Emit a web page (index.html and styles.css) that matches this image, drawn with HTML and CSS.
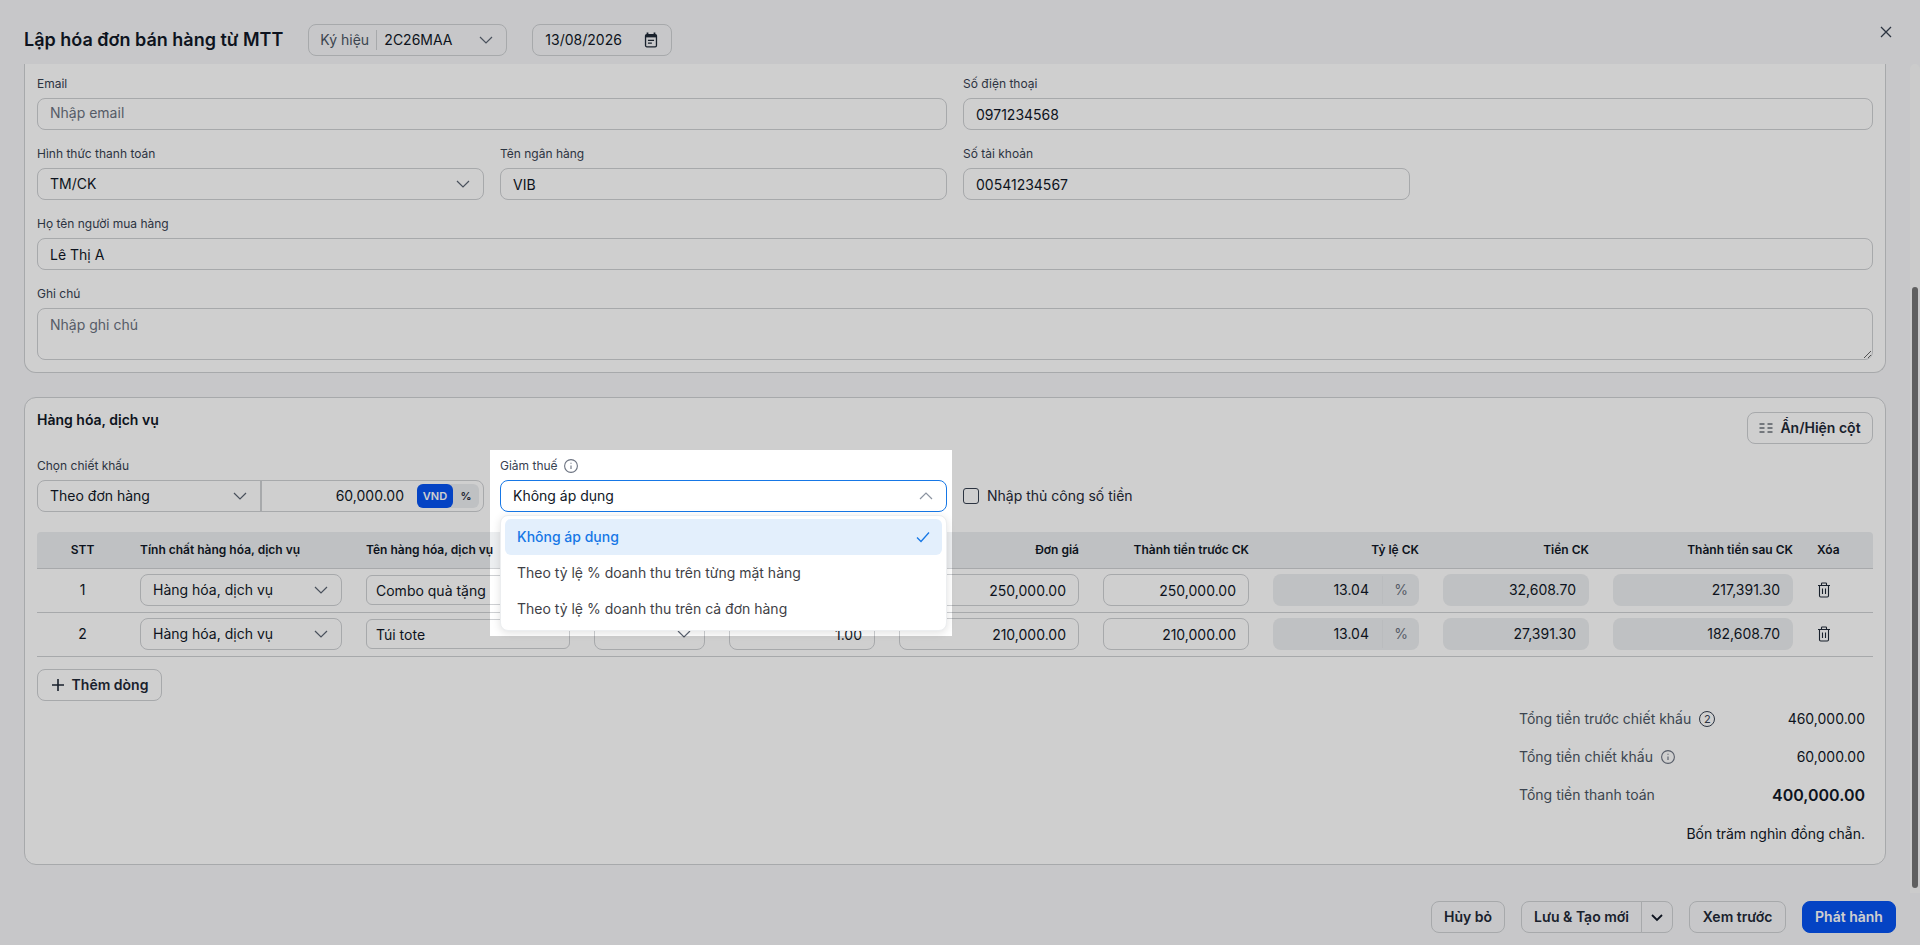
FILE: index.html
```html
<!DOCTYPE html>
<html lang="vi">

<head>
    <meta charset="UTF-8">
    <meta name="viewport" content="width=device-width, initial-scale=1.0">
    <title>Lập hóa đơn bán hàng từ MTT</title>
    <link rel="stylesheet" href="styles.css">
</head>

<body>
    <div class="modal">
        <header class="modal-header">
            <h1 class="modal-title">Lập hóa đơn bán hàng từ MTT</h1>
            <div class="symbol-picker">
                <span class="symbol-label">Ký hiệu</span>
                <span class="symbol-value">2C26MAA</span>
                <svg class="chevron" viewBox="0 0 16 16"><path d="M2 5l6 6 6-6"/></svg>
            </div>
            <div class="date-picker">
                <span>13/08/2026</span>
                <svg class="calendar-icon" viewBox="0 0 16 18">
                    <path d="M4 0.5v2.5M12 0.5v2.5" stroke-width="2"/>
                    <rect x="1.75" y="2.75" width="12.5" height="14" rx="1.5" stroke-width="1.5"/>
                    <path d="M2 4.5h12" stroke-width="3"/>
                    <path d="M4.5 9.5h7M4.5 12.5h4.5" stroke-width="1.5"/>
                </svg>
            </div>
            <button class="close-btn" aria-label="Đóng">
                <svg viewBox="0 0 12 12"><path d="M1 1l10 10M11 1L1 11"/></svg>
            </button>
        </header>

        <div class="modal-main">
            <div class="modal-content">
                <section class="card card-buyer">
                    <div class="form-grid">
                        <div class="field span-2">
                            <label class="field-label">Email</label>
                            <input class="text-input empty-input" type="text" placeholder="Nhập email">
                        </div>
                        <div class="field span-2">
                            <label class="field-label">Số điện thoại</label>
                            <input class="text-input" type="text" value="0971234568">
                        </div>
                        <div class="field">
                            <label class="field-label">Hình thức thanh toán</label>
                            <div class="select-box">
                                <span>TM/CK</span>
                                <svg class="chevron" viewBox="0 0 16 16"><path d="M2 5l6 6 6-6"/></svg>
                            </div>
                        </div>
                        <div class="field">
                            <label class="field-label">Tên ngân hàng</label>
                            <input class="text-input" type="text" value="VIB">
                        </div>
                        <div class="field">
                            <label class="field-label">Số tài khoản</label>
                            <input class="text-input" type="text" value="00541234567">
                        </div>
                        <div class="field span-4">
                            <label class="field-label">Họ tên người mua hàng</label>
                            <input class="text-input" type="text" value="Lê Thị A">
                        </div>
                        <div class="field span-4">
                            <label class="field-label">Ghi chú</label>
                            <textarea class="text-area" placeholder="Nhập ghi chú"></textarea>
                        </div>
                    </div>
                </section>

                <section class="card card-items">
                    <div class="items-top">
                        <h2 class="items-title">Hàng hóa, dịch vụ</h2>
                        <button class="btn btn-columns">
                            <svg class="columns-icon" viewBox="0 0 14 10">
                                <path d="M0.5 1h5M0.5 5h5M0.5 9h5M8.5 1h5M8.5 5h5M8.5 9h5"/>
                            </svg>
                            Ẩn/Hiện cột
                        </button>
                    </div>

                    <div class="form-grid discount-row">
                        <div class="field">
                            <label class="field-label">Chọn chiết khấu</label>
                            <div class="discount-group">
                                <div class="discount-select">
                                    <span>Theo đơn hàng</span>
                                    <svg class="chevron" viewBox="0 0 16 16"><path d="M2 5l6 6 6-6"/></svg>
                                </div>
                                <div class="discount-amount">
                                    <span class="discount-value">60,000.00</span>
                                    <div class="unit-toggle">
                                        <span class="unit unit-active">VND</span>
                                        <span class="unit">%</span>
                                    </div>
                                </div>
                            </div>
                        </div>
                        <div class="field tax-field">
                            <label class="field-label">
                                Giảm thuế
                                <svg class="info-icon" viewBox="0 0 14 14">
                                    <circle cx="7" cy="7" r="6.4"/>
                                    <path d="M7 6.5v3.5M7 3.8v1"/>
                                </svg>
                            </label>
                            <div class="select-box select-open">
                                <span>Không áp dụng</span>
                                <svg class="chevron" viewBox="0 0 16 16"><path d="M2 11l6-6 6 6"/></svg>
                            </div>
                            <ul class="dropdown">
                                <li class="dropdown-item dropdown-item-active">
                                    Không áp dụng
                                    <svg class="check-icon" viewBox="0 0 14 14"><path d="M1 7.5l4 4 8-9"/></svg>
                                </li>
                                <li class="dropdown-item">Theo tỷ lệ % doanh thu trên từng mặt hàng</li>
                                <li class="dropdown-item">Theo tỷ lệ % doanh thu trên cả đơn hàng</li>
                            </ul>
                        </div>
                        <label class="manual-check">
                            <span class="checkbox"></span>
                            Nhập thủ công số tiền
                        </label>
                    </div>

                    <div class="items-table">
                        <div class="tbl-row tbl-head">
                            <div class="cell center">STT</div>
                            <div class="cell">Tính chất hàng hóa, dịch vụ</div>
                            <div class="cell">Tên hàng hóa, dịch vụ</div>
                            <div class="cell"></div>
                            <div class="cell"></div>
                            <div class="cell right">Đơn giá</div>
                            <div class="cell right">Thành tiền trước CK</div>
                            <div class="cell right">Tỷ lệ CK</div>
                            <div class="cell right">Tiền CK</div>
                            <div class="cell right">Thành tiền sau CK</div>
                            <div class="cell">Xóa</div>
                        </div>

                        <div class="tbl-row">
                            <div class="cell center">1</div>
                            <div class="cell">
                                <div class="select-box"><span>Hàng hóa, dịch vụ</span><svg class="chevron" viewBox="0 0 16 16"><path d="M2 5l6 6 6-6"/></svg></div>
                            </div>
                            <div class="cell"><input class="text-input name-input" type="text" value="Combo quà tặng"></div>
                            <div class="cell">
                                <div class="select-box"><span></span><svg class="chevron" viewBox="0 0 16 16"><path d="M2 5l6 6 6-6"/></svg></div>
                            </div>
                            <div class="cell"><input class="text-input num-input" type="text"></div>
                            <div class="cell"><input class="text-input num-input" type="text" value="250,000.00"></div>
                            <div class="cell"><input class="text-input num-input" type="text" value="250,000.00"></div>
                            <div class="cell">
                                <div class="readonly-box"><span class="percent-value">13.04</span><span class="percent-unit">%</span></div>
                            </div>
                            <div class="cell"><div class="readonly-box">32,608.70</div></div>
                            <div class="cell"><div class="readonly-box">217,391.30</div></div>
                            <div class="cell">
                                <svg class="trash-icon" viewBox="0 0 14 16">
                                    <path d="M1 3.5h12M4.5 3.5V1.7q0-.7.7-.7h3.6q.7 0 .7.7v1.8M2.5 3.5v10.3q0 1.2 1.2 1.2h6.6q1.2 0 1.2-1.2V3.5M5.5 6.5v5.5M8.5 6.5v5.5"/>
                                </svg>
                            </div>
                        </div>

                        <div class="tbl-row">
                            <div class="cell center">2</div>
                            <div class="cell">
                                <div class="select-box"><span>Hàng hóa, dịch vụ</span><svg class="chevron" viewBox="0 0 16 16"><path d="M2 5l6 6 6-6"/></svg></div>
                            </div>
                            <div class="cell"><input class="text-input name-input" type="text" value="Túi tote"></div>
                            <div class="cell">
                                <div class="select-box"><span></span><svg class="chevron" viewBox="0 0 16 16"><path d="M2 5l6 6 6-6"/></svg></div>
                            </div>
                            <div class="cell"><input class="text-input num-input" type="text" value="1.00"></div>
                            <div class="cell"><input class="text-input num-input" type="text" value="210,000.00"></div>
                            <div class="cell"><input class="text-input num-input" type="text" value="210,000.00"></div>
                            <div class="cell">
                                <div class="readonly-box"><span class="percent-value">13.04</span><span class="percent-unit">%</span></div>
                            </div>
                            <div class="cell"><div class="readonly-box">27,391.30</div></div>
                            <div class="cell"><div class="readonly-box">182,608.70</div></div>
                            <div class="cell">
                                <svg class="trash-icon" viewBox="0 0 14 16">
                                    <path d="M1 3.5h12M4.5 3.5V1.7q0-.7.7-.7h3.6q.7 0 .7.7v1.8M2.5 3.5v10.3q0 1.2 1.2 1.2h6.6q1.2 0 1.2-1.2V3.5M5.5 6.5v5.5M8.5 6.5v5.5"/>
                                </svg>
                            </div>
                        </div>
                    </div>

                    <button class="btn btn-add">
                        <svg class="plus-icon" viewBox="0 0 14 14"><path d="M7 1v12M1 7h12"/></svg>
                        Thêm dòng
                    </button>

                    <div class="summary">
                        <div class="summary-row">
                            <span class="summary-label">
                                Tổng tiền trước chiết khấu
                                <span class="count-badge">2</span>
                            </span>
                            <span>460,000.00</span>
                        </div>
                        <div class="summary-row">
                            <span class="summary-label">
                                Tổng tiền chiết khấu
                                <svg class="info-icon" viewBox="0 0 14 14">
                                    <circle cx="7" cy="7" r="6.4"/>
                                    <path d="M7 6.5v3.5M7 3.8v1"/>
                                </svg>
                            </span>
                            <span>60,000.00</span>
                        </div>
                        <div class="summary-row">
                            <span class="summary-label">Tổng tiền thanh toán</span>
                            <span class="summary-total">400,000.00</span>
                        </div>
                        <div class="summary-words">Bốn trăm nghìn đồng chẵn.</div>
                    </div>
                </section>
            </div>

            <div class="scroll-track">
                <div class="scroll-thumb"></div>
            </div>
        </div>

        <footer class="modal-footer">
            <button class="btn btn-cancel">Hủy bỏ</button>
            <div class="btn-split">
                <button class="btn btn-split-main">Lưu &amp; Tạo mới</button>
                <button class="btn btn-split-caret" aria-label="Thêm">
                    <svg class="chevron chevron-bold" viewBox="0 0 16 16"><path d="M3 6l5 5 5-5"/></svg>
                </button>
            </div>
            <button class="btn btn-preview">Xem trước</button>
            <button class="btn btn-primary">Phát hành</button>
        </footer>
    </div>

    <!-- lop phu huong dan, chua lo quanh o Giam thue -->
    <div class="spotlight"></div>
</body>

</html>
```

FILE: styles.css
```css
* {
    box-sizing: border-box;
}

body {
    margin: 0;
    height: 100vh;
    overflow: hidden;
    position: relative;
    background: #f5f6f8;
    color: #111827;
    font-family: Inter, "Noto Sans", sans-serif;
    font-size: 14px;
    line-height: 20px;
}

button,
input,
textarea {
    font: inherit;
    color: inherit;
}

.modal {
    display: flex;
    flex-direction: column;
    height: 100%;
}

/* Header */
.modal-header {
    display: flex;
    align-items: center;
    height: 64px;
    flex-shrink: 0;
    padding: 16px 24px 0;
}

.modal-title {
    margin: 0 25px 0 0;
    font-size: 18px;
    line-height: 28px;
    font-weight: 600;
}

.symbol-picker,
.date-picker {
    display: flex;
    align-items: center;
    height: 32px;
    border: 1px solid #ced0d3;
    border-radius: 8px;
}

.symbol-picker {
    width: 199px;
    padding: 0 12px 0 11px;
}

.symbol-label {
    color: #4b5563;
    padding-right: 8px;
    border-right: 1px solid #ced0d3;
    width: 57px;
    white-space: nowrap;
}

.symbol-value {
    margin-left: 7px;
    flex: 1;
}

.date-picker {
    width: 140px;
    margin-left: 25px;
    padding: 0 13px 0 12px;
    justify-content: space-between;
}

.calendar-icon {
    width: 14px;
    height: 16px;
    fill: none;
    stroke: #1f2937;
}

.close-btn {
    margin-left: auto;
    margin-right: 4px;
    margin-top: -16px;
    padding: 0;
    border: none;
    background: none;
    width: 12px;
    height: 12px;
    display: flex;
}

.close-btn svg {
    fill: none;
    stroke: #374151;
    stroke-width: 1.3;
}

/* Body */
.modal-main {
    flex: 1;
    min-height: 0;
    display: flex;
}

.modal-content {
    flex: 1;
    min-width: 0;
    padding-left: 24px;
    margin-right: 24px;
}

.scroll-track {
    width: 10px;
    border-radius: 5px 5px 0 0;
    background: #fafafa;
    padding: 223px 2px 0;
}

.scroll-thumb {
    width: 6px;
    height: 601px;
    border-radius: 3px;
    background: #777;
}

.card {
    background: #fff;
    border: 1px solid #ced0d3;
    border-radius: 12px;
    padding: 12px;
}

.card-buyer {
    border-top: none;
    border-radius: 0 0 12px 12px;
    margin-bottom: 24px;
}

.card-items {
    padding-bottom: 20px;
}

.form-grid {
    display: grid;
    grid-template-columns: repeat(4, 1fr);
    gap: 16px;
}

.field {
    display: flex;
    flex-direction: column;
    gap: 6px;
    min-width: 0;
}

.span-2 {
    grid-column: span 2;
}

.span-4 {
    grid-column: span 4;
}

.field-label {
    display: flex;
    align-items: center;
    gap: 6px;
    font-size: 12px;
    line-height: 16px;
    color: #374151;
}

.text-input,
.select-box,
.text-area {
    width: 100%;
    height: 32px;
    padding: 0 12px;
    background: transparent;
    border: 1px solid #ced0d3;
    border-radius: 8px;
    outline: none;
}

.text-input::placeholder,
.text-area::placeholder {
    color: #6b7280;
    opacity: 1;
}

.empty-input {
    padding-bottom: 4px;
}

.text-area {
    display: block;
    height: 52px;
    padding-top: 6px;
    resize: vertical;
}

.select-box {
    display: flex;
    align-items: center;
    justify-content: space-between;
}

.select-open {
    border-color: #1677e6;
}

.select-open .chevron {
    stroke: #8b93a0;
}

.chevron {
    width: 16px;
    height: 16px;
    flex-shrink: 0;
    fill: none;
    stroke: #5b6472;
    stroke-width: 1.2;
}

.chevron-bold {
    stroke: #111827;
    stroke-width: 1.8;
}

/* Hang hoa */
.items-top {
    display: flex;
    justify-content: space-between;
    align-items: flex-start;
    height: 34px;
    margin-bottom: 14px;
}

.items-title {
    margin: 0;
    font-size: 14px;
    line-height: 20px;
    font-weight: 600;
}

.btn {
    display: inline-flex;
    align-items: center;
    justify-content: center;
    height: 32px;
    padding: 0 12px;
    background: transparent;
    border: 1px solid #ced0d3;
    border-radius: 8px;
    font-weight: 600;
    color: #1f2937;
    white-space: nowrap;
}

.btn-columns {
    width: 126px;
    padding: 0;
    margin-top: 2px;
    gap: 7px;
}

.columns-icon {
    width: 14px;
    height: 10px;
    fill: none;
    stroke: #1f2937;
    stroke-width: 1;
}

.discount-row {
    margin-bottom: 20px;
}

.discount-group {
    display: flex;
    height: 32px;
    border: 1px solid #ced0d3;
    border-radius: 8px;
}

.discount-select {
    display: flex;
    align-items: center;
    justify-content: space-between;
    width: 224px;
    padding: 0 12px;
    border-right: 2px solid #ced0d3;
}

.discount-amount {
    flex: 1;
    display: flex;
    align-items: center;
    justify-content: flex-end;
    gap: 13px;
    padding-right: 4px;
}

.unit-toggle {
    display: flex;
    width: 62px;
    height: 24px;
    background: #eceef0;
    border-radius: 6px;
}

.unit {
    flex: 1;
    display: flex;
    align-items: center;
    justify-content: center;
    font-size: 11px;
    font-weight: 600;
    color: #1f2937;
}

.unit-active {
    flex: none;
    width: 36px;
    background: #0553f2;
    color: #fff;
    border-radius: 6px;
}

.tax-field {
    position: relative;
}

.dropdown {
    position: absolute;
    top: 100%;
    left: 0;
    right: 0;
    z-index: 10;
    margin: 3px 0 0;
    padding: 3px 4px;
    list-style: none;
    background: #fff;
    border: 1px solid #eceef0;
    border-radius: 8px;
    box-shadow: 0 2px 8px rgba(0, 0, 0, 0.12);
}

.dropdown-item {
    display: flex;
    align-items: center;
    justify-content: space-between;
    height: 36px;
    padding: 0 12px;
    color: #3f3f46;
    border-radius: 6px;
}

.dropdown-item-active {
    background: #e3effc;
    color: #1677e6;
    font-weight: 500;
}

.check-icon {
    width: 14px;
    height: 14px;
    fill: none;
    stroke: #1677e6;
    stroke-width: 1.3;
}

.info-icon {
    width: 14px;
    height: 14px;
    fill: none;
    stroke: #6b7280;
    stroke-width: 1.1;
}

.manual-check {
    display: flex;
    align-items: center;
    align-self: end;
    height: 32px;
    gap: 8px;
    color: #1f2937;
}

.checkbox {
    width: 16px;
    height: 16px;
    border: 1px solid #374151;
    border-radius: 3px;
}

/* Bang */
.tbl-row {
    display: grid;
    grid-template-columns: 91px 226px 228px 135px 170px 204px 170px 170px 170px 204px 68px;
    align-items: center;
    height: 44px;
    padding-bottom: 1px;
    border-bottom: 1px solid #ced0d3;
}

.tbl-head {
    height: 37px;
    padding-bottom: 0;
    background: #eceef0;
    border-radius: 4px 4px 0 0;
    font-size: 12px;
    font-weight: 600;
}

.cell {
    padding: 0 12px;
    min-width: 0;
    white-space: nowrap;
}

.center {
    text-align: center;
}

.right {
    text-align: right;
}

.name-input {
    height: 30px;
    padding: 0 9px;
    border-radius: 6px;
}

.num-input {
    text-align: right;
}

.readonly-box {
    display: flex;
    align-items: center;
    justify-content: flex-end;
    height: 32px;
    padding: 0 13px;
    background: #eceef0;
    border-radius: 8px;
}

.percent-value {
    flex: 1;
    text-align: right;
    padding-right: 13px;
    border-right: 1px solid #e6e8ea;
    line-height: 28px;
}

.percent-unit {
    width: 36px;
    margin-right: -13px;
    text-align: center;
    color: #6b7280;
}

.trash-icon {
    display: block;
    width: 14px;
    height: 16px;
    fill: none;
    stroke: #1f2937;
    stroke-width: 1.1;
}

.btn-add {
    width: 125px;
    margin-top: 12px;
    gap: 7px;
    display: flex;
}

.plus-icon {
    width: 14px;
    height: 14px;
    fill: none;
    stroke: #1f2937;
    stroke-width: 1.6;
}

.summary {
    width: 346px;
    margin: 0 8px 0 auto;
}

.summary-row {
    display: flex;
    align-items: center;
    justify-content: space-between;
    height: 36px;
    margin-bottom: 2px;
}

.summary-label {
    display: flex;
    align-items: center;
    gap: 8px;
    color: #4b5563;
}

.count-badge {
    display: flex;
    align-items: center;
    justify-content: center;
    width: 16px;
    height: 16px;
    border: 1px solid #374151;
    border-radius: 50%;
    font-size: 11px;
    line-height: 1;
    color: #374151;
}

.summary-total {
    font-size: 16px;
    font-weight: 600;
}

.summary-words {
    margin-top: 11px;
    text-align: right;
}

/* Footer */
.modal-footer {
    display: flex;
    justify-content: flex-end;
    gap: 16px;
    height: 52px;
    flex-shrink: 0;
    padding: 8px 24px 0 0;
}

.btn-cancel {
    width: 74px;
}

.btn-preview {
    width: 97px;
}

.btn-split {
    display: flex;
}

.btn-split-main {
    width: 121px;
    border-radius: 8px 0 0 8px;
}

.btn-split-caret {
    width: 32px;
    padding: 0;
    margin-left: -1px;
    border-radius: 0 8px 8px 0;
}

.btn-primary {
    width: 94px;
    background: #0553f2;
    border-color: #0553f2;
    color: #fff;
}

.spotlight {
    position: absolute;
    top: 450px;
    left: 490px;
    width: 462px;
    height: 186px;
    z-index: 20;
    pointer-events: none;
    box-shadow: 0 0 0 2000px rgba(0, 0, 0, 0.19);
}
```
